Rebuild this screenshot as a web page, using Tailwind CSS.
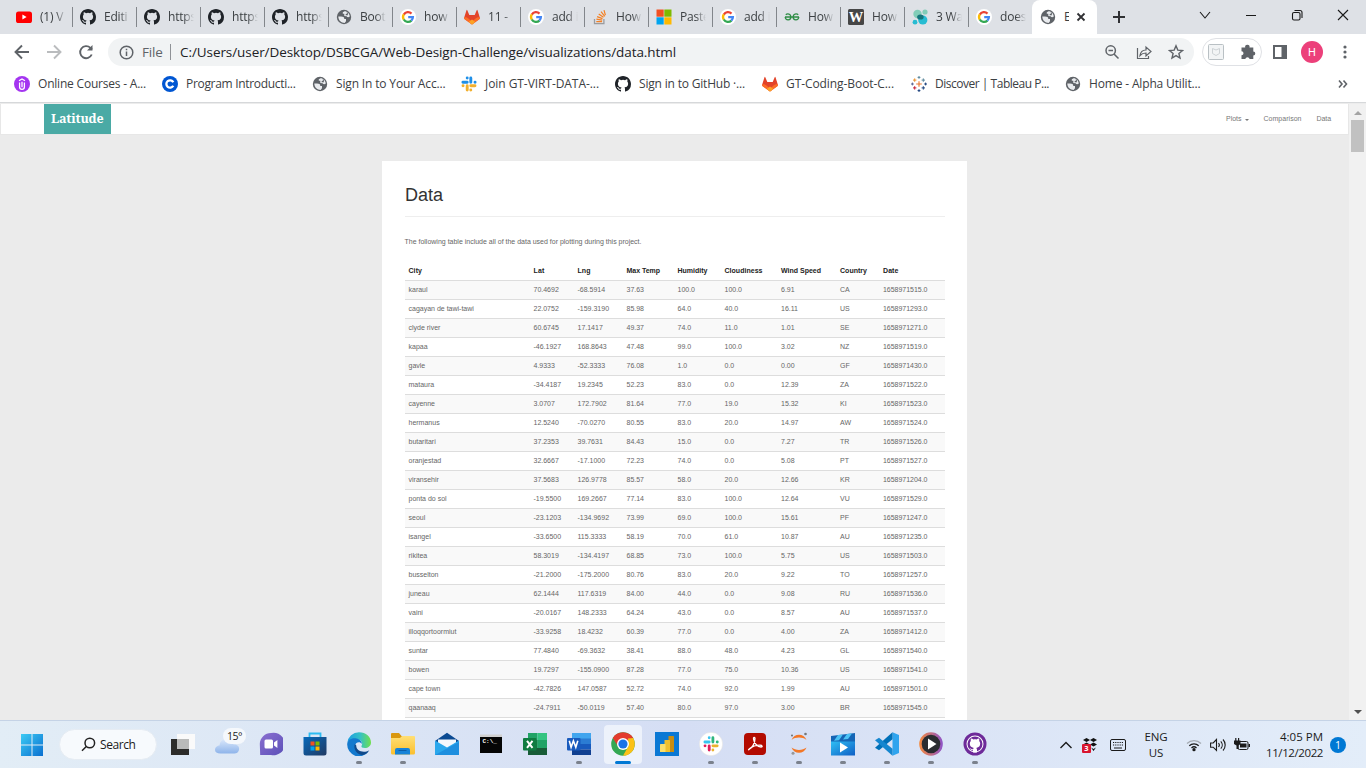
<!DOCTYPE html>
<html lang="en">
<head>
<meta charset="utf-8">
<title>Data</title>
<script src="https://cdn.jsdelivr.net/npm/@tailwindcss/browser@4"></script>
</head>
<body class="w-[1366px] h-[768px] overflow-hidden flex flex-col bg-white font-['Open_Sans',sans-serif] text-[#3c4043]">
<svg class="absolute size-0">
  <defs>
    <linearGradient id="gw" x1="0" y1="0" x2="1" y2="1"><stop offset="0" stop-color="#3ccbf4"/><stop offset="1" stop-color="#0a6fd0"/></linearGradient>
    <linearGradient id="gc" x1="0" y1="0" x2="0" y2="1"><stop offset="0" stop-color="#dbe8fb"/><stop offset="1" stop-color="#8eb4ea"/></linearGradient>
    <linearGradient id="gt" x1="0" y1="0" x2="1" y2="1"><stop offset="0" stop-color="#8a6fd0"/><stop offset="1" stop-color="#5b50b8"/></linearGradient>
    <linearGradient id="gs" x1="0" y1="0" x2="1" y2="1"><stop offset="0" stop-color="#0669bb"/><stop offset="1" stop-color="#213a63"/></linearGradient>
    <linearGradient id="ge" x1="0" y1="0" x2="1" y2="0"><stop offset="0" stop-color="#1b9de2"/><stop offset=".55" stop-color="#35c1c4"/><stop offset="1" stop-color="#6fe04c"/></linearGradient>
    <linearGradient id="gm" x1="0" y1="0" x2="1" y2="1"><stop offset="0" stop-color="#2fc0f5"/><stop offset="1" stop-color="#0f5ec4"/></linearGradient>
    <linearGradient id="gp" x1="0" y1="0" x2="1" y2="0"><stop offset="0" stop-color="#f58a3c"/><stop offset="1" stop-color="#8d52c9"/></linearGradient>
    <linearGradient id="gf" x1="0" y1="0" x2="0" y2="1"><stop offset="0" stop-color="#ffdf75"/><stop offset="1" stop-color="#fbbf2d"/></linearGradient>
    <symbol id="youtube" viewBox="0 0 16 16"><rect y="2.5" width="16" height="11.5" rx="2.6" fill="#f00"/><path d="M6.4 5.6v5l4.2-2.5z" fill="#fff"/></symbol>
    <symbol id="github" viewBox="0 0 16 16"><path fill="currentColor" d="M8 0C3.58 0 0 3.58 0 8c0 3.54 2.29 6.53 5.47 7.59.4.07.55-.17.55-.38 0-.19-.01-.82-.01-1.49-2.01.37-2.53-.49-2.69-.94-.09-.23-.48-.94-.82-1.13-.28-.15-.68-.52-.01-.53.63-.01 1.08.58 1.23.82.72 1.21 1.87.87 2.33.66.07-.52.28-.87.51-1.07-1.78-.2-3.64-.89-3.64-3.95 0-.87.31-1.59.82-2.15-.08-.2-.36-1.02.08-2.12 0 0 .67-.21 2.2.82a7.6 7.6 0 0 1 4 0c1.53-1.04 2.2-.82 2.2-.82.44 1.1.16 1.92.08 2.12.51.56.82 1.27.82 2.15 0 3.07-1.87 3.75-3.65 3.95.29.25.54.73.54 1.48 0 1.07-.01 1.93-.01 2.2 0 .21.15.46.55.38A8 8 0 0 0 16 8c0-4.42-3.58-8-8-8z"/></symbol>
    <symbol id="globe" viewBox="0 0 16 16"><circle cx="8" cy="8" r="7.2" fill="#5f6368"/><path d="M2.300 7.600 H5 C7.300 7.600 8.300 8.300 8.300 10 H10 V12.200 L8.600 14 C5.500 14 2.500 12 2.300 7.600z" fill="#e9ebee"/><path d="M8.600 2.200 C11 2.200 13.600 4.300 13.800 7.600 C12.500 8.600 11.200 8.300 10.600 7.300 L8.300 6.900 V4.800 H6.800 V3.200z" fill="#e9ebee"/><path d="M11.300 3.600v2H9.700" fill="none" stroke="#5f6368" stroke-width="1.100"/></symbol>
    <symbol id="google" viewBox="0 0 16 16"><circle cx="8" cy="8" r="8" fill="#fff"/><g fill="none" stroke-width="2.3"><path d="M3.8 5.6A4.9 4.9 0 0 1 11.5 4.6" stroke="#ea4335"/><path d="M3.8 5.4a4.9 4.9 0 0 0 0 5.2" stroke="#fbbc05"/><path d="M3.8 10.5a4.9 4.9 0 0 0 7.6 1.1" stroke="#34a853"/><path d="M8.2 8.1h4.7a4.9 4.9 0 0 1-1.6 3.6" stroke="#4285f4"/></g></symbol>
    <symbol id="gitlab" viewBox="0 0 16 16"><path d="M8 15.500 .7 10.200Q-.1 9.500.2 8.500L2.500 1.200Q2.900.4 3.300 1.200L5.300 6h5.400L12.700 1.200Q13.100.4 13.500 1.200L15.800 8.500Q16.100 9.500 15.300 10.200z" fill="#e24329"/><path d="M.2 8.500C1.500 7.800 3.500 8.500 5 10L8 12.600 11 10C12.500 8.500 14.500 7.800 15.800 8.500Q16.100 9.500 15.300 10.200L8 15.500.7 10.200Q-.1 9.500.2 8.500z" fill="#fc6d26"/><path d="M8 10.500 11.300 13 8 15.500 4.700 13z" fill="#fca326"/></symbol>
    <symbol id="so" viewBox="0 0 16 16"><path d="M2.5 10v4.7h9.4V10" fill="none" stroke="#9a9c9f" stroke-width="1.3"/><path d="M4.3 12.6h5.8M4.4 10.2l5.8.9M5.1 7.6l5.4 2M6.7 5l4.8 3.3M9 2.7l3.8 4.600M12 1.200l1.400 5" stroke="#f48024" stroke-width="1.200"/></symbol>
    <symbol id="ms" viewBox="0 0 16 16"><path d="M.5.5h7.2v7.2H.5z" fill="#f25022"/><path d="M8.3.5h7.2v7.2H8.3z" fill="#7fba00"/><path d="M.5 8.3h7.2v7.2H.5z" fill="#00a4ef"/><path d="M8.3 8.3h7.2v7.2H8.3z" fill="#ffb900"/></symbol>
    <symbol id="gfg" viewBox="0 0 16 16"><path d="M1 8h14M1.800 5.800C3.500 3.900 6.900 5 6.900 8 6.900 11.600 1.600 12 1.200 8M14.200 5.800C12.500 3.900 9.100 5 9.100 8 9.100 11.600 14.400 12 14.800 8" fill="none" stroke="#2f8d46" stroke-width="1.300"/></symbol>
    <symbol id="wiki" viewBox="0 0 16 16"><rect width="16" height="16" rx="1.500" fill="#464646"/><text x="8" y="13" text-anchor="middle" font-family="Liberation Serif" font-weight="bold" font-size="14.500" fill="#fff">W</text></symbol>
    <symbol id="blob" viewBox="0 0 16 16"><circle cx="5.500" cy="5" r="4.200" fill="#82cdb8"/><circle cx="13" cy="3" r="2.600" fill="#82cdb8"/><circle cx="10.800" cy="11" r="4.600" fill="#27bcd2"/><circle cx="3" cy="13.200" r="2.400" fill="#27bcd2"/><ellipse cx="8.400" cy="8" rx="3.300" ry="2.600" fill="#16767c"/></symbol>
    <symbol id="udemy" viewBox="0 0 16 16"><circle cx="8" cy="8" r="8" fill="#a435f0"/><path d="M5.600 6.500V11a2.400 2.400 0 0 0 4.800 0V6.500M5 4.800 8 3l3 1.800M8 5.800v5.400" fill="none" stroke="#fff" stroke-width="1.300"/></symbol>
    <symbol id="coursera" viewBox="0 0 16 16"><circle cx="8" cy="8" r="8" fill="#0056d2"/><path d="M11.300 6.200a3.700 3.700 0 1 0 0 3.600" fill="none" stroke="#fff" stroke-width="2.300"/></symbol>
    <symbol id="slack2" viewBox="0 0 16 16"><g stroke-width="2.900" stroke-linecap="round"><path d="M6.200 2v.1M6.200 6.200H1.900M9.800 2v4.200M14 6.200h.1" stroke="#1e8fe8"/><path d="M9.800 9.800H14M6.200 9.800V14M9.800 13.900v.1M2 9.800h.1" stroke="#f2b02e"/></g></symbol>
    <symbol id="slack4" viewBox="0 0 24 24"><circle cx="12" cy="12" r="11.700" fill="#fff" stroke="#ddd" stroke-width=".5"/><g stroke-width="2.800" stroke-linecap="round"><path d="M10.200 5.700v.1M10.200 10H5.900" stroke="#36c5f0"/><path d="M13.900 5.700V10M18.200 10h.1" stroke="#2eb67d"/><path d="M13.900 13.800h4.300M13.900 18v.1" stroke="#ecb22e"/><path d="M10.200 13.800v4.300M6 13.800h.1" stroke="#e01e5a"/></g></symbol>
    <symbol id="tableau" viewBox="0 0 16 16"><path d="M8 5.200v5.600M5.200 8h5.600" stroke="#e8762c" stroke-width="1.100"/><path d="M3.700 2.400v3.400M2 4.100h3.400" stroke="#eb912c"/><path d="M12.300 2.400v3.400M10.600 4.100H14M8 0v2.800M6.600 1.400h2.800" stroke="#59879b"/><path d="M3.700 10.200v3.400M2 11.900h3.400" stroke="#c72035"/><path d="M12.300 10.200v3.400M10.600 11.900H14M8 13.200V16M6.600 14.600h2.800" stroke="#1f447e"/><path d="M1.400 6.600v2.800M0 8h2.800" stroke="#5b6591"/><path d="M14.600 6.600v2.800M13.200 8H16" stroke="#1f447e"/></symbol>
    <symbol id="win" viewBox="0 0 24 24"><path d="M1 1h10.500v10.500H1zM12.500 1H23v10.500H12.500zM1 12.500h10.500V23H1zM12.500 12.500H23V23H12.500z" fill="url(#gw)"/></symbol>
    <symbol id="taskview" viewBox="0 0 24 24"><rect x="6" y="1" width="18" height="15" fill="#fafafa"/><path d="M0 6h18v16H0z" fill="#2c2c2a"/><path d="M6 6h12v10H6z" fill="#b9bab9"/></symbol>
    <symbol id="chat" viewBox="0 0 24 24"><path d="M12 1a11.300 11.300 0 1 1 0 22H1.200L.8 12A11.200 11.200 0 0 1 12 1z" fill="url(#gt)"/><rect x="5.500" y="7.500" width="8.500" height="9" rx="1.500" fill="#fff"/><path d="m15 10.500 3.400-2.400v8L15 13.500z" fill="#fff"/></symbol>
    <symbol id="store" viewBox="0 0 24 24"><path d="M6.500 6V1.500h11V6" fill="none" stroke="#2cbcf2" stroke-width="1.800"/><path d="M.5 5h23v16a2.500 2.500 0 0 1-2.500 2.500H3A2.500 2.500 0 0 1 .5 21z" fill="url(#gs)"/><path d="M7.500 9.500h4v4h-4z" fill="#f25022"/><path d="M12.500 9.500h4v4h-4z" fill="#7fba00"/><path d="M7.500 14.500h4v4h-4z" fill="#00a4ef"/><path d="M12.500 14.500h4v4h-4z" fill="#ffb900"/></symbol>
    <symbol id="edge" viewBox="0 0 24 24"><path d="M.3 11A11.800 11.800 0 0 1 12 .2C19 .2 24 5 24 10.500c0 3.600-3 5.500-6 5.500-2.800 0-4-1-3.500-2 2-3-.5-6.500-4-6.500C6 7.500 1 9 .3 11z" fill="url(#ge)"/><path d="M.2 12C.5 8 5 5.500 9.500 6.500c3 .6 5.500 3 5.500 5.500-2-3-7-2-7 2.500 0 5 5 7.500 9 7l4.500-2A11.800 11.800 0 0 1 .2 12z" fill="#1379ce"/><path d="M7.800 12c-1.800 5.500 2.500 11.200 8.200 11 3-1 5-2.500 6.300-4.800-6 3.500-13.500.5-13-4.700z" fill="#114a8b"/></symbol>
    <symbol id="folder" viewBox="0 0 24 24"><path d="M0 2a1 1 0 0 1 1-1h7l2.500 3H23v6H0z" fill="#d9970f"/><path d="M0 6h9l2-2h12a1 1 0 0 1 1 1v16a1.500 1.500 0 0 1-1.500 1.500h-21A1.500 1.500 0 0 1 0 21z" fill="url(#gf)"/><path d="M4 22.500V18a2 2 0 0 1 2-2h11a2 2 0 0 1 2 2v4.500z" fill="#1683d8"/><path d="M7.500 18.500h8" stroke="#0b5da8"/></symbol>
    <symbol id="mail" viewBox="0 0 24 24"><path d="M0 9 12 .8 24 9v4H0z" fill="#0b4a92"/><path d="M3 7.500h18V17H3z" fill="#f4f8fc"/><path d="m0 8.500 12 7L24 8.500V23H0z" fill="#2aa7ec"/><path d="M0 23 24 10v13z" fill="#1e8fdf"/></symbol>
    <symbol id="cmd" viewBox="0 0 24 24"><path d="M1 3h22v18H1z" fill="#050505"/><path d="M1 2.500h22V5H1z" fill="#d0d0d0"/><text x="3.500" y="11" font-family="Liberation Mono" font-weight="bold" font-size="6" fill="#fff">C:\_</text></symbol>
    <symbol id="excel" viewBox="0 0 24 24"><path d="M5 1h9.500v22H5z" fill="#21a366"/><path d="M14.500 1H24v7h-9.500z" fill="#33c481"/><path d="M5 8h9.500v8H5z" fill="#107c41"/><path d="M14.500 8H24v8h-9.500z" fill="#21a366"/><path d="M5 16h19v7H5z" fill="#185c37"/><rect y="6" width="13.500" height="12.500" rx="1" fill="#107c41"/><path d="m4 8.800 5.500 7M9.500 8.800l-5.500 7" stroke="#fff" stroke-width="2"/></symbol>
    <symbol id="word" viewBox="0 0 24 24"><path d="M5 1h19v6H5z" fill="#41a5ee"/><path d="M5 6.500h19V12H5z" fill="#2b7cd3"/><path d="M5 12h19v5.500H5z" fill="#185abd"/><path d="M5 17.500h19V23H5z" fill="#103f91"/><rect y="6" width="13.500" height="12.500" rx="1" fill="#185abd"/><path d="m2.300 8.800 1.800 6.500 2.300-6.500L8.800 15.300l2-6.500" fill="none" stroke="#fff" stroke-width="1.600"/></symbol>
    <symbol id="chrome" viewBox="0 0 24 24"><circle cx="12" cy="12" r="11.800" fill="#34a853"/><path d="M1.800 6.100A11.800 11.800 0 0 1 22.200 6.100L12 12z" fill="#e33b2e"/><path d="M22.200 6.100A11.800 11.800 0 0 1 12 23.800L17.500 14 17 6.500z" fill="#fbc116"/><path d="M1.800 6.100 7.500 15l4.500-9z" fill="#e33b2e"/><circle cx="12" cy="12" r="6" fill="#fff"/><circle cx="12" cy="12" r="4.600" fill="#1a73e8"/></symbol>
    <symbol id="pbi" viewBox="0 0 24 24"><path d="M0 0h24v24H0z" fill="#0a78d4"/><rect x="13.500" y="4" width="5.500" height="16" rx=".6" fill="#c98d10"/><rect x="9.500" y="8" width="5.500" height="12" rx=".6" fill="#f0c02c"/><rect x="5" y="12" width="5.500" height="8" rx=".6" fill="#fadf6a"/></symbol>
    <symbol id="acrobat" viewBox="0 0 24 24"><rect x="1" y="1" width="22" height="22" rx="4" fill="#b30b00"/><path d="M6 17.500c3-1.500 6-6 6-11 0-1.800-1.800-1.200-1.500.5.500 4 4 8 7.500 8 1.800 0 1.500-1.800-1-1.800-4 0-8 1.500-10.500 3.500-1 .9-1.200 1.400-.5.800z" fill="none" stroke="#fff" stroke-width="1.300"/></symbol>
    <symbol id="jupyter" viewBox="0 0 24 24"><path d="M4.500 8C7 1 17 1 19.500 8 15.500 4.800 8.500 4.800 4.500 8zM4.500 15.500c2.500 7 12.500 7 15 0-4 3.200-11 3.200-15 0z" fill="#f37726"/><circle cx="18.500" cy="2" r="1.300" fill="#767677"/><circle cx="6" cy="21.300" r="1.500" fill="#989798"/><circle cx="5" cy="3.500" r=".9" fill="#616262"/></symbol>
    <symbol id="movies" viewBox="0 0 24 24"><path d="M0 9h24v14.500H0z" fill="url(#gm)"/><path d="M0 4 24 1v8.500H0z" fill="#1565b5"/><path d="m7 3 5-.6-4 5.800-5 .6zM16 2l5-.6-4 5.500-5 .7z" fill="#4cc3f5"/><path d="M9 10.500v10l8-5z" fill="#fff"/></symbol>
    <symbol id="vscode" viewBox="0 0 24 24"><path d="M17.500.3 24 3v18l-6.500 2.700z" fill="#2fa4ee"/><path d="M17.500.3v7L4 18.200 0 15.800z" fill="#0070b8"/><path d="M17.500 23.700v-7L4 5.800 0 8.200z" fill="#1586cf"/></symbol>
    <symbol id="media" viewBox="0 0 24 24"><circle cx="12" cy="12" r="11.800" fill="url(#gp)"/><circle cx="12" cy="12" r="9.300" fill="#2a2c30"/><path d="M9 6.500v11l8.500-5.500z" fill="#fff"/></symbol>
    <symbol id="ghd" viewBox="0 0 24 24"><circle cx="12" cy="12" r="11.500" fill="#6e2a99"/><circle cx="12" cy="12" r="8.500" fill="#fff"/><circle cx="12" cy="12" r="7.500" fill="#6e2a99"/><path d="M12 20.500h-2v-2.300C8 18.700 7.500 17 6.500 16.300c1.500-.2 2 1.500 3.600.9.100-.6.300-1 .7-1.300C8 15.600 6.800 14 6.800 11.600c0-1 .3-1.900 1-2.600-.2-.8-.2-1.600.2-2.500 1 0 1.800.5 2.500 1 1-.2 2-.2 3 0 .7-.5 1.500-1 2.500-1 .4.900.4 1.700.2 2.500.7.700 1 1.600 1 2.600 0 2.400-1.200 4-4 4.300.5.400.8 1 .8 1.900v2.700z" fill="#fff"/></symbol>
  </defs>
</svg>

<!-- Tab strip -->
<header class="h-[34px] shrink-0 bg-[#dee1e6] flex pl-2">
  <div id="tabs" class="flex"></div>
  <div class="w-[65px] h-[34px] bg-white rounded-t-lg flex items-center pl-2">
    <svg class="size-4 shrink-0"><use href="#globe"/></svg>
    <span class="w-[5px] ml-2 overflow-hidden text-xs">E</span>
    <svg class="size-[10px] ml-[7px]" viewBox="0 0 10 10" fill="none" stroke="#303134" stroke-width="1.800"><path d="m1.500 1.500 7 7M8.500 1.500l-7 7"/></svg>
  </div>
  <div class="w-11 flex items-center justify-center"><svg class="size-3" viewBox="0 0 12 12" fill="none" stroke="#303134" stroke-width="2"><path d="M6 0v12M0 6h12"/></svg></div>
  <div class="ml-auto h-[29px] flex items-center text-[#1a1a1a]">
    <svg class="w-[46px] h-3" viewBox="-23 -6 46 12" fill="none" stroke="currentColor" stroke-width="1.100"><path d="m-5-3 5 6 5-6"/></svg>
    <svg class="w-[46px] h-3" viewBox="-23 -6 46 12" fill="none" stroke="currentColor"><path d="M-5 .5H5"/></svg>
    <svg class="w-[46px] h-3" viewBox="-23 -6 46 12" fill="none" stroke="currentColor" stroke-width="1.100"><rect x="-4.500" y="-2.500" width="7.500" height="7.500" rx="1.500"/><path d="M-2.500-4.500h5.500a2 2 0 0 1 2 2V3"/></svg>
    <svg class="w-[46px] h-3" viewBox="-23 -6 46 12" fill="none" stroke="currentColor" stroke-width="1.100"><path d="m-5-5 10 10M5-5-5 5"/></svg>
  </div>
</header>

<!-- Toolbar -->
<div class="h-9 shrink-0 flex items-center text-[#5f6368]">
  <svg class="size-4 ml-[14px]" viewBox="0 0 16 16" fill="none" stroke="#5f6368" stroke-width="1.900"><path d="M15 8H2M8 1.500 1.500 8 8 14.500"/></svg>
  <svg class="size-4 ml-4" viewBox="0 0 16 16" fill="none" stroke="#babcbe" stroke-width="1.900"><path d="M1 8h13M8 1.500 14.500 8 8 14.500"/></svg>
  <svg class="size-4 ml-4" viewBox="0 0 16 16" fill="none" stroke="#5f6368" stroke-width="1.900"><path d="M13.700 10.500a6 6 0 1 1-1.300-6.600L14 5.500"/><path d="M14.500 1v5.500H9z" fill="#5f6368" stroke="none"/></svg>
  <div class="w-[1086px] h-7 ml-[14px] rounded-full bg-[#f1f3f4] flex items-center pl-[11px] pr-[10px]">
    <svg class="size-[15px]" viewBox="0 0 15 15" fill="none" stroke="#5f6368" stroke-width="1.500"><circle cx="7.500" cy="7.500" r="6.300"/><path d="M7.500 6.500V11M7.500 3.700v1.500"/></svg>
    <span class="w-[21px] ml-2 text-[13.500px] leading-5 whitespace-nowrap"><span data-w="20.500">File</span></span>
    <span class="w-px h-4 bg-[#8f9297] ml-[7px]"></span>
    <span class="ml-[9px] text-[13.500px] leading-5 text-[#202124] whitespace-nowrap" data-w="496">C:/Users/user/Desktop/DSBCGA/Web-Design-Challenge/visualizations/data.html</span>
    <div class="ml-auto flex items-center gap-4">
      <svg class="size-4" viewBox="0 0 16 16" fill="none" stroke="#5f6368" stroke-width="1.500"><circle cx="6.700" cy="6.500" r="4.700"/><path d="m10 10 4.500 4.500M4.500 6.500H9"/></svg>
      <svg class="size-4" viewBox="0 0 16 16" fill="none" stroke="#5f6368" stroke-width="1.200"><path d="M1.500 4v10.500h11V12"/><path d="M4 11.500C4.500 8 6.500 6 10 6V3l5 4.500-5 4.500V9C7.500 9 5.500 9.800 4 11.500z"/></svg>
      <svg class="size-4" viewBox="0 0 16 16" fill="none" stroke="#5f6368" stroke-width="1.400"><path d="m8 1.800 1.800 4.300 4.700.4-3.600 3 1.100 4.600-4-2.500-4 2.500 1.100-4.600-3.600-3 4.700-.4z"/></svg>
    </div>
  </div>
  <div class="w-[60px] h-7 ml-2 rounded-full border border-[#dfe1e5] flex items-center justify-between pl-[5px] pr-[5px]">
    <svg class="size-4" viewBox="0 0 16 16" fill="#f2f4f5" stroke="#b9c0c4"><rect x=".5" y=".5" width="15" height="15" rx="1"/><path d="M4.500 4.500 8 6l3.500-1.500v5L8 11.500l-3.500-2z" fill="none" stroke="#cdd2d5"/></svg>
    <svg class="size-4" viewBox="0 0 16 16" fill="#5f6368"><path d="M1.500 3.500h3.700a2.200 2.200 0 1 1 4.300 0h3.800v4a2 2 0 1 1 0 4V15H9.600a2.200 2.200 0 0 0-4.300 0H1.500v-3.800a2 2 0 1 0 0-4z"/></svg>
  </div>
  <svg class="size-[14px] ml-[11px]" viewBox="0 0 14 14"><path d="M1 1h12v12H1z" fill="none" stroke="#5f6368" stroke-width="2"/><path d="M8.500 0H14v14H8.500z" fill="#5f6368"/></svg>
  <div class="size-[22px] ml-[14px] rounded-full bg-[#ec407a] text-white text-[11px] leading-none flex items-center justify-center font-[Roboto]">H</div>
  <svg class="w-1 h-[14px] ml-5" viewBox="0 0 4 14" fill="#5f6368"><circle cx="2" cy="2" r="1.600"/><circle cx="2" cy="7" r="1.600"/><circle cx="2" cy="12" r="1.600"/></svg>
</div>

<!-- Bookmarks -->
<div class="h-[32px] shrink-0 flex items-center pl-[14px] pb-1">
  <div id="bookmarks" class="flex items-center"></div>
  <svg class="size-[10px] ml-auto mr-[18px]" viewBox="0 0 10 10" fill="none" stroke="#5f6368" stroke-width="1.600"><path d="m1 1.500 3 3.500-3 3.500M5.500 1.500l3 3.500-3 3.500"/></svg>
</div>
<div class="h-[2px] shrink-0 border-t border-[#d6d8da] bg-[#ececec]"></div>

<!-- Page -->
<div class="h-[616px] shrink-0 flex overflow-hidden font-['Liberation_Sans',Arial,sans-serif]">
  <div class="w-[1349px] h-full bg-[#ebebeb]">
    <nav class="h-[31px] bg-white border border-t-0 border-[#e7e7e7] flex items-center text-[7px] text-[#777]">
      <a class="ml-[43px] w-[67px] h-[30px] bg-[#4aaaa5] text-white font-bold text-[12.500px] leading-[29px] pl-[7px] font-['Noto_Serif','DejaVu_Serif_Condensed','DejaVu_Serif',serif] font-stretch-condensed whitespace-nowrap" data-w="52.500">Latitude</a>
      <a class="ml-auto mt-[1px] whitespace-nowrap" data-w="15.500">Plots</a>
      <span class="ml-[3px] mt-[1px] border-x-2 border-t-2 border-x-transparent border-t-[#777]"></span>
      <a class="ml-[15px] mt-[1px] whitespace-nowrap" data-w="38">Comparison</a>
      <a class="ml-[15px] mr-[17px] mt-[1px] whitespace-nowrap" data-w="14.500">Data</a>
    </nav>
    <main class="ml-[382px] mt-[26px] w-[585px] h-[560px] bg-white pl-[23px] pr-[22px] overflow-hidden">
      <h1 class="pt-[22px] h-[55px] text-[18px] leading-6 text-[#333]">Data</h1>
      <div class="border-t border-[#eee] h-[20px]"></div>
      <p class="h-[21px] leading-[12px] text-[7px] text-[#666] whitespace-nowrap -ml-[.5px]"><span data-w="237">The following table include all of the data used for plotting during this project.</span></p>
      <div class="mt-[5px] text-[7px] leading-[10px]" id="table"></div>
    </main>
  </div>
  <div class="w-[17px] bg-[#f1f1f1] flex flex-col items-center">
    <span class="mt-[7px] border-x-4 border-b-4 border-x-transparent border-b-[#a3a3a3]"></span>
    <span class="mt-[5px] w-[13px] h-8 bg-[#c1c1c1]"></span>
    <span class="mt-auto mb-[6px] border-x-4 border-t-4 border-x-transparent border-t-[#505050]"></span>
  </div>
</div>

<!-- Taskbar -->
<footer class="h-12 shrink-0 border-t border-[#c5d3e6] bg-linear-to-r from-[#e2edf6] via-[#d5def4] to-[#e3edf9] flex items-center text-[#1b1b1b]">
  <svg class="size-6 ml-[20px]"><use href="#win"/></svg>
  <div class="ml-[15px] w-[98px] h-[31px] rounded-full bg-[#f7fafd] border border-[#e6ecf3] flex items-center pl-[21px] shrink-0">
    <svg class="size-[15px]" viewBox="0 0 15 15" fill="none" stroke="#222" stroke-width="1.500"><circle cx="8.800" cy="6" r="4.800"/><path d="M5.300 9.500 1 13.800"/></svg>
    <span class="ml-1 text-xs whitespace-nowrap" data-w="35.500">Search</span>
  </div>
  <svg class="size-6 ml-[14px]"><use href="#taskview"/></svg>
  <svg class="w-9 h-[30px] ml-[19px] -mr-px" viewBox="0 0 36 30"><path d="M1 21c0-3 2.500-4.500 4.500-4.500C6 12 9 10 13 10c3.500 0 6 2.500 6.500 5.500C23 15 26 17.500 25 21c-.6 2.500-2.500 3.500-4.500 3.500h-14C3 24.500 1 23 1 21z" transform="translate(0 -1)" fill="url(#gc)"/></svg>
  <div class="-ml-[26px] -mt-[17px] w-[23px] h-4 rounded-full bg-[#f5f8fc] text-[10.500px] leading-4 text-center whitespace-nowrap z-10"><span data-w="15">15°</span></div>
  <div id="apps" class="flex ml-[3px]"></div>
  <div class="ml-auto flex items-center pr-5 text-[11.500px] leading-4">
    <svg class="w-3 h-2" viewBox="0 0 12 8" fill="none" stroke="#1b1b1b" stroke-width="1.400"><path d="m.5 7 5.500-5.500L11.500 7"/></svg>
    <svg class="w-4 h-4 ml-[10px]" viewBox="0 0 16 16"><path d="m4.500 1 3.500 2-3.500 2L1 3zM11.500 1 15 3l-3.500 2L8 3zM11.500 5.500 15 7.500l-3.500 2-3.500-2zM4.500 5.500 8 7.500l-3.500 2-3.500-2zM9 10.500l2.500 1.500L14 10.500 11.500 14z" fill="#111"/><rect y="7" width="9" height="9" rx="1" fill="#d8152f"/><text x="4.500" y="14.200" text-anchor="middle" font-size="7.500" font-weight="bold" fill="#fff">3</text></svg>
    <svg class="w-4 h-3 ml-[12px]" viewBox="0 0 16 12" fill="none" stroke="#1b1b1b"><rect x=".5" y=".5" width="15" height="11" rx="1.500"/><path d="M3 3.500h10M3 6h10" stroke-dasharray="1.200 1"/><path d="M4 9h8"/></svg>
    <div class="w-[24px] ml-[18px] text-center whitespace-nowrap"><div><span data-w="23">ENG</span></div><div><span data-w="14.500">US</span></div></div>
    <svg class="w-4 h-[14px] ml-[18px]" viewBox="0 0 16 14" fill="none" stroke="#1b1b1b" stroke-width="1.300"><path d="M1 5.500a10 10 0 0 1 14 0" stroke="#a5abb3"/><path d="M3.300 7.800a6.700 6.700 0 0 1 9.400 0M5.500 10a3.600 3.600 0 0 1 5 0"/><circle cx="8" cy="11.700" r="1" fill="#1b1b1b"/></svg>
    <svg class="w-[17px] h-[14px] ml-[8px]" viewBox="0 0 17 14" fill="none" stroke="#1b1b1b" stroke-width="1.100"><path d="M.6 5v4.200h2.600L6.500 12.500V1.500L3.200 5zM8.500 5a3 3 0 0 1 0 4M10.800 3.300a5.500 5.500 0 0 1 0 7.400M13 1.500a8 8 0 0 1 0 11"/></svg>
    <svg class="w-4 h-[13px] ml-[7px]" viewBox="0 0 16 13"><rect x="4" y="3.500" width="10" height="8" rx="1.500" fill="none" stroke="#1b1b1b"/><path d="M6 5.500h6.500v4H6zM14.500 6H16v3h-1.500zM0 2.500h6.500V6L4.500 7.500V11H2.500V7.500L0 6zM1.200 0h1.200v3H1.200zM4 0h1.200v3H4z" fill="#1b1b1b"/></svg>
    <div class="w-[60px] ml-[13px] text-right whitespace-nowrap"><div><span data-w="43">4:05 PM</span></div><div><span data-w="57">11/12/2022</span></div></div>
    <div class="size-4 ml-[7px] rounded-full bg-[#0078d4] text-white text-[10.500px] leading-4 text-center">1</div>
  </div>
</footer>

<script>
const icon = (id, cls) => `<svg class="${cls}"><use href="#${id}"/></svg>`;
const tabs = [['youtube','(1) V'],['github','Editi'],['github','https'],['github','https'],['github','https'],['globe','Boot'],['google','how'],['gitlab','11 -'],['google','add i'],['so','How'],['ms','Paste'],['google','add i'],['gfg','How'],['wiki','How'],['blob','3 Wa'],['google','does']];
document.getElementById('tabs').innerHTML = tabs.map(([i,t],n) => `<div class="w-16 h-[34px] flex items-center pl-2 relative text-[#1f2328]">${icon(i,'size-4 shrink-0')}<span class="w-[26px] ml-2 overflow-hidden whitespace-nowrap text-xs tracking-[-0.2px] text-[#3c4043] mask-r-from-60%">${t}</span>${n<15?'<span class="absolute right-[-1px] top-[7px] w-px h-5 bg-[#82868b]"></span>':''}</div>`).join('');
const marks = [['udemy','Online Courses - A...',148,108],['coursera','Program Introducti...',150,109.5],['globe','Sign In to Your Acc...',149,109.5],['slack2','Join GT-VIRT-DATA-...',154,114],['github','Sign in to GitHub ·...',147,106],['gitlab','GT-Coding-Boot-C...',149,108],['tableau','Discover | Tableau P...',154,114],['globe','Home - Alpha Utilit...',140,111.5]];
document.getElementById('bookmarks').innerHTML = marks.map(([i,t,p,w]) => `<div class="flex items-center text-[#1f2328]" style="width:${p}px">${icon(i,'size-4 shrink-0')}<span class="ml-2 text-xs whitespace-nowrap text-[#3c4043]" data-w="${w}">${t}</span></div>`).join('');
const apps = ['chat','store','edge*','folder*','mail','cmd','excel','word*','chrome!','pbi','slack4*','acrobat*','jupyter*','movies*','vscode*','media*','ghd*'];
document.getElementById('apps').innerHTML = apps.map(a => {
  const id = a.replace(/[*!]/,''), active = a.endsWith('!');
  const bar = active ? '<span class="absolute bottom-[1px] w-4 h-[3px] rounded-full bg-[#0078d4]"></span>' : a.endsWith('*') ? '<span class="absolute bottom-[1px] w-[6px] h-[3px] rounded-full bg-[#7b818c]"></span>' : '';
  return `<div class="w-11 h-10 flex justify-center relative"><div class="w-[38px] h-[39px] flex justify-center pt-[7px] rounded ${active?'bg-[#edf2fb]':''}">${icon(id,'size-6')}</div>${bar}</div>`;
}).join('');
const rows = `City|Lat|Lng|Max Temp|Humidity|Cloudiness|Wind Speed|Country|Date
karaul|70.4692|-68.5914|37.63|100.0|100.0|6.91|CA|1658971515.0
cagayan de tawi-tawi|22.0752|-159.3190|85.98|64.0|40.0|16.11|US|1658971293.0
clyde river|60.6745|17.1417|49.37|74.0|11.0|1.01|SE|1658971271.0
kapaa|-46.1927|168.8643|47.48|99.0|100.0|3.02|NZ|1658971519.0
gavle|4.9333|-52.3333|76.08|1.0|0.0|0.00|GF|1658971430.0
mataura|-34.4187|19.2345|52.23|83.0|0.0|12.39|ZA|1658971522.0
cayenne|3.0707|172.7902|81.64|77.0|19.0|15.32|KI|1658971523.0
hermanus|12.5240|-70.0270|80.55|83.0|20.0|14.97|AW|1658971524.0
butaritari|37.2353|39.7631|84.43|15.0|0.0|7.27|TR|1658971526.0
oranjestad|32.6667|-17.1000|72.23|74.0|0.0|5.08|PT|1658971527.0
viransehir|37.5683|126.9778|85.57|58.0|20.0|12.66|KR|1658971204.0
ponta do sol|-19.5500|169.2667|77.14|83.0|100.0|12.64|VU|1658971529.0
seoul|-23.1203|-134.9692|73.99|69.0|100.0|15.61|PF|1658971247.0
isangel|-33.6500|115.3333|58.19|70.0|61.0|10.87|AU|1658971235.0
rikitea|58.3019|-134.4197|68.85|73.0|100.0|5.75|US|1658971503.0
busselton|-21.2000|-175.2000|80.76|83.0|20.0|9.22|TO|1658971257.0
juneau|62.1444|117.6319|84.00|44.0|0.0|9.08|RU|1658971536.0
vaini|-20.0167|148.2333|64.24|43.0|0.0|8.57|AU|1658971537.0
illoqqortoormiut|-33.9258|18.4232|60.39|77.0|0.0|4.00|ZA|1658971412.0
suntar|77.4840|-69.3632|38.41|88.0|48.0|4.23|GL|1658971540.0
bowen|19.7297|-155.0900|87.28|77.0|75.0|10.36|US|1658971541.0
cape town|-42.7826|147.0587|52.72|74.0|92.0|1.99|AU|1658971501.0
qaanaaq|-24.7911|-50.0119|57.40|80.0|97.0|3.00|BR|1658971545.0
`.trim().split('\n').map(r => r.split('|'));
const heads = [13.5,11,13,33.5,30,38,40,27,15.5];
document.getElementById('table').innerHTML = rows.map((r,n) => `<div class="h-[19px] grid grid-cols-[125px_44px_49px_51px_47px_56.5px_59px_43px_auto] items-center pl-[4px] border-b border-[#ddd] whitespace-nowrap ${n===0?'font-bold text-[#222]':n%2?'bg-[#f9f9f9] text-[#666]':'text-[#666]'}">${r.map((c,k) => `<div class="-ml-[.5px]"><span ${n===0?`data-w="${heads[k]}"`:k===8?'data-w="44.5"':''}>${c}</span></div>`).join('')}</div>`).join('');
// Justify each marked label to its nominal width once styles are in force
window.addEventListener('load', () => {
  document.querySelectorAll('[data-w]').forEach(e => {
    const range = document.createRange(); range.selectNodeContents(e);
    e.style.letterSpacing = (e.dataset.w - range.getBoundingClientRect().width) / e.textContent.length + 'px';
  });
});
</script>
</body>
</html>
